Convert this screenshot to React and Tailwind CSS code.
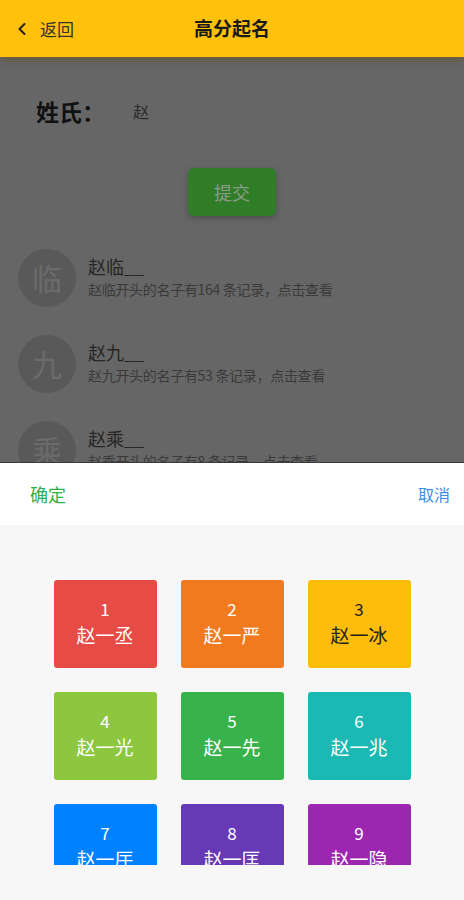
import { ChevronLeft } from "lucide-react"

const names = [
    { avatar: "临", name: "赵临__", desc: "赵临开头的名子有164 条记录，点击查看" },
    { avatar: "九", name: "赵九__", desc: "赵九开头的名子有53 条记录，点击查看" },
    { avatar: "乘", name: "赵乘__", desc: "赵乘开头的名子有8 条记录，点击查看" },
]

const options = [
    { n: 1, text: "赵一丞", bg: "bg-[#e64b45]", fg: "text-white" },
    { n: 2, text: "赵一严", bg: "bg-[#f27a1e]", fg: "text-white" },
    { n: 3, text: "赵一冰", bg: "bg-[#fdbd0a]", fg: "text-[#222]" },
    { n: 4, text: "赵一光", bg: "bg-[#8dc63f]", fg: "text-white" },
    { n: 5, text: "赵一先", bg: "bg-[#38b24a]", fg: "text-white" },
    { n: 6, text: "赵一兆", bg: "bg-[#1bb9b3]", fg: "text-white" },
    { n: 7, text: "赵一厈", bg: "bg-[#0081ff]", fg: "text-white" },
    { n: 8, text: "赵一匡", bg: "bg-[#6739b6]", fg: "text-white" },
    { n: 9, text: "赵一隐", bg: "bg-[#9c26b0]", fg: "text-white" },
]

function App() {
    return (
        <div className="relative w-[464px] h-[900px] overflow-hidden bg-[#666666] font-['Noto_Sans_CJK_SC','Noto_Sans',sans-serif]">
            {/* header */}
            <div className="relative z-10 h-[57px] bg-[#ffc10a] flex items-center shadow-[0_3px_8px_rgba(90,70,0,0.45)]">
                <div className="flex items-center pl-[12px] w-[120px]">
                    <ChevronLeft className="w-[20px] h-[20px] text-[#222]" strokeWidth={2.5} />
                    <span className="ml-[8px] text-[17px] text-[#333]">返回</span>
                </div>
                <div className="flex-1 text-center text-[19px] font-bold text-[#1a1a1a] pr-[120px]">高分起名</div>
            </div>

            {/* surname */}
            <div className="flex items-center pl-[36px] mt-[38px] h-[32px]">
                <span className="text-[23px] font-bold text-[#111] w-[97px]">姓氏：</span>
                <span className="text-[16px] text-[#2a2a2a]">赵</span>
            </div>

            <div className="flex justify-center mt-[41px]">
                <button className="w-[88px] h-[48px] rounded-[6px] bg-[#2f7d27] text-[18px] text-[#8c9c88] shadow-[0_2px_6px_rgba(0,0,0,0.25)]">提交</button>
            </div>

            {/* list */}
            <div className="mt-[19px]">
                {names.map((item) => (
                    <div key={item.avatar} className="flex items-center h-[86px] pl-[18px] border-b border-[#646464]">
                        <div className="w-[58px] h-[58px] rounded-full bg-[#595959] flex items-center justify-center text-[30px] text-[#6b6b6b]">
                            {item.avatar}
                        </div>
                        <div className="ml-[12px] -mt-[4px]">
                            <div className="text-[18px] leading-[26px] text-[#262626]">{item.name}</div>
                            <div className="text-[14px] leading-[20px] tracking-[-0.3px] text-[#3a3a3a]">{item.desc}</div>
                        </div>
                    </div>
                ))}
            </div>

            {/* picker sheet */}
            <div className="absolute left-0 right-0 bottom-0 h-[438px] flex flex-col bg-[#f7f7f7] border-t border-[#3a3a3a]">
                <div className="h-[62px] bg-white flex items-center justify-between pl-[30px] pr-[14px]">
                    <span className="text-[18px] text-[#2faf45]">确定</span>
                    <span className="text-[16px] text-[#3d8de8]">取消</span>
                </div>
                <div className="h-[340px] overflow-hidden pt-[55px]">
                    <div className="grid grid-cols-[103px_103px_103px] gap-x-[24px] gap-y-[24px] justify-center">
                        {options.map((o) => (
                            <div key={o.n} className={`${o.bg} ${o.fg} h-[88px] rounded-[3px] flex flex-col items-center justify-center pb-[5px]`}>
                                <div className="text-[17px] leading-[26px]">{o.n}</div>
                                <div className="text-[19px] leading-[26px]">{o.text}</div>
                            </div>
                        ))}
                    </div>
                </div>
            </div>
        </div>
    )
}

export default App
